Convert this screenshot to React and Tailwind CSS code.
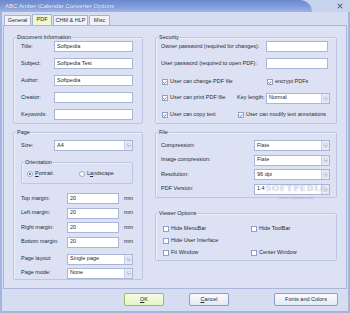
import React from "react";

const PANEL = "bg-[#dce2f3]";

function TextBox({ className = "", value }) {
  return (
    <div className={`h-[11px] bg-white border border-[#a9b6d6] flex items-center pl-[2px] shrink-0 ${className}`}>
      {value}
    </div>
  );
}

function Select({ className = "", value }) {
  return (
    <div className={`h-[11px] bg-white border border-[#a9b6d6] flex items-center shrink-0 ${className}`}>
      <span className="flex-1 pl-[2px]">{value}</span>
      <span className="w-[8px] h-full bg-[#e4eaf8] border-l border-[#c3cde7] flex items-center justify-center">
        <svg viewBox="0 0 6 6" className="w-[5px] h-[5px]">
          <circle cx="3" cy="3" r="2.6" fill="#f4f6fc" stroke="#9aa9cf" strokeWidth="0.5" />
          <path d="M1.7 2.4 L3 3.7 L4.3 2.4" stroke="#3c4f86" strokeWidth="0.8" fill="none" />
        </svg>
      </span>
    </div>
  );
}

function Check({ checked, label, className = "" }) {
  return (
    <div className={`flex items-center gap-[2px] shrink-0 ${className}`}>
      <span className="w-[6px] h-[6px] bg-white border border-[#8ea0c8] flex items-center justify-center shrink-0">
        {checked && (
          <svg viewBox="0 0 6 6" className="w-[5px] h-[5px]">
            <path d="M0.9 2.9 L2.3 4.4 L5.1 1.2" stroke="#2c4599" strokeWidth="1.1" fill="none" />
          </svg>
        )}
      </span>
      <span>{label}</span>
    </div>
  );
}

function Radio({ checked, children, className = "" }) {
  return (
    <div className={`flex items-center gap-[2px] ${className}`}>
      <span className="w-[6px] h-[6px] rounded-full bg-white border border-[#9aaacd] flex items-center justify-center">
        {checked && <span className="w-[2px] h-[2px] rounded-full bg-[#3b54a8]" />}
      </span>
      <span>{children}</span>
    </div>
  );
}

function Group({ title, className = "", children }) {
  return (
    <div className={`relative border border-[#bcc6e2] rounded-[2px] shadow-[inset_1px_1px_0_#eef1fa] ${className}`}>
      <span className={`absolute -top-[4px] left-[2px] px-[1px] leading-[7px] ${PANEL}`}>{title}</span>
      {children}
    </div>
  );
}

function Row({ label, labelClass, children, className = "" }) {
  return (
    <div className={`flex items-center h-[11px] ${className}`}>
      <span className={`shrink-0 ${labelClass}`}>{label}</span>
      {children}
    </div>
  );
}

function Tab({ label, active, className = "" }) {
  return (
    <div
      className={`h-[10px] border border-b-0 border-[#a5b3d6] rounded-t-[1px] flex items-center justify-center ${
        active ? "bg-[#eef6d3]" : "bg-[#f1f3fa]"
      } ${className}`}
    >
      {label}
    </div>
  );
}

function Button({ children, className = "" }) {
  return (
    <div
      className={`h-[13px] border border-[#8e9cc0] rounded-[2px] flex items-center justify-center bg-gradient-to-b from-[#fbfcff] to-[#e3e8f5] ${className}`}
    >
      {children}
    </div>
  );
}

export default function App() {
  return (
    <div
      className="w-[350px] h-[313px] flex flex-col bg-[#d6ddf1] text-[5.5px] leading-none whitespace-nowrap text-[#262a33] overflow-hidden"
      style={{ fontFamily: '"Liberation Sans", Arial, sans-serif' }}
    >
      {/* title bar */}
      <div className="relative h-[12px] bg-[#c8d3ee] shrink-0 flex">
        <div className="w-[312px] h-full rounded-tr-[14px] bg-gradient-to-b from-[#6c89d0] via-[#7f9ad8] to-[#9fb4e4] flex items-center pl-[5px]">
          <span className="text-white text-[6px] [text-shadow:0_0_1px_#3b4f8c]">ABC Amber iCalendar Converter Options</span>
        </div>
        <div className="flex-1 flex items-center justify-end pr-[7px]">
          <svg viewBox="0 0 8 8" className="w-[6px] h-[6px]">
            <path d="M1 1 L7 7 M7 1 L1 7" stroke="#4a5675" strokeWidth="1.4" />
          </svg>
        </div>
      </div>

      <div className="flex-1 flex flex-col border-l-2 border-r-2 border-b-2 border-[#a3b4df]">
        {/* tabs */}
        <div className="flex items-end h-[13px] pl-[2px] gap-[1px]">
          <Tab label="General" className="w-[27px]" />
          <Tab label="PDF" active className="w-[20px] h-[11px]" />
          <Tab label="CHM & HLP" className="w-[35px]" />
          <Tab label="Misc" className="w-[21px]" />
        </div>

        {/* tab panel */}
        <div className={`relative h-[264px] mx-[1px] border border-[#a9b7d9] ${PANEL} flex pt-[11px] pl-[9px]`}>
          {/* left column */}
          <div className="w-[130px] flex flex-col">
            <Group title="Document Information" className="h-[87px] pt-[3px]">
              <div className="flex flex-col gap-[6px] pl-[7px]">
                <Row label="Title:" labelClass="w-[33px]"><TextBox className="w-[79px]" value="Softpedia" /></Row>
                <Row label="Subject:" labelClass="w-[33px]"><TextBox className="w-[79px]" value="Softpedia Test" /></Row>
                <Row label="Author:" labelClass="w-[33px]"><TextBox className="w-[79px]" value="Softpedia" /></Row>
                <Row label="Creator:" labelClass="w-[33px]"><TextBox className="w-[79px]" /></Row>
                <Row label="Keywords:" labelClass="w-[33px]"><TextBox className="w-[79px]" /></Row>
              </div>
            </Group>

            <Group title="Page" className="mt-[8px] h-[148px] pt-[7px] pl-[7px]">
              <Row label="Size:" labelClass="w-[33px]"><Select className="w-[79px]" value="A4" /></Row>
              <Group title="Orientation" className="mt-[11px] w-[112px] h-[22px] pt-[7px]">
                <div className="flex items-center h-[8px] pl-[5px]">
                  <Radio checked className="w-[52px]"><span className="underline">P</span>ortrait</Radio>
                  <Radio>L<span className="underline">a</span>ndscape</Radio>
                </div>
              </Group>
              <div className="mt-[9px] flex flex-col gap-[3.5px]">
                {["Top margin:", "Left margin:", "Right margin:", "Bottom margin:"].map((l) => (
                  <Row key={l} label={l} labelClass="w-[46px]">
                    <TextBox className="w-[52px]" value="20" />
                    <span className="ml-[5px]">mm</span>
                  </Row>
                ))}
              </div>
              <div className="mt-[6px] flex flex-col gap-[3px]">
                <Row label="Page layout:" labelClass="w-[46px]"><Select className="w-[66px]" value="Single page" /></Row>
                <Row label="Page mode:" labelClass="w-[46px]"><Select className="w-[66px]" value="None" /></Row>
              </div>
            </Group>
          </div>

          {/* right column */}
          <div className="w-[182px] ml-[12px] flex flex-col">
            <Group title="Security" className="h-[87px] pt-[3px]">
              <div className="pl-[5px]">
                <Row label="Owner password (required for changes):" labelClass="w-[105px]"><TextBox className="w-[62px]" /></Row>
                <Row label="User password (required to open PDF):" labelClass="w-[105px]" className="mt-[6px]"><TextBox className="w-[62px]" /></Row>
              </div>
              <div className="pl-[6px]">
                <div className="flex items-center h-[11px] mt-[7.5px]">
                  <Check checked label="User can change PDF file" className="w-[105px]" />
                  <Check checked label="encrypt PDFs" />
                </div>
                <div className="flex items-center h-[11px] mt-[5px]">
                  <Check checked label="User can print PDF file" className="w-[75px]" />
                  <span className="w-[29px] shrink-0">Key length:</span>
                  <Select className="w-[64px]" value="Normal" />
                </div>
                <div className="flex items-center h-[11px] mt-[6px]">
                  <Check checked label="User can copy text" className="w-[76px]" />
                  <Check checked label="User can modify text annotations" />
                </div>
              </div>
            </Group>

            <Group title="File" className="mt-[8px] h-[66px] pt-[7px] pl-[5px]">
              <div className="flex flex-col gap-[3.5px]">
                <Row label="Compression:" labelClass="w-[93px]"><Select className="w-[76px]" value="Flate" /></Row>
                <Row label="Image compression:" labelClass="w-[93px]"><Select className="w-[76px]" value="Flate" /></Row>
                <Row label="Resolution:" labelClass="w-[93px]"><Select className="w-[76px]" value="96 dpi" /></Row>
                <Row label="PDF Version:" labelClass="w-[93px]"><Select className="w-[76px]" value="1.4" /></Row>
              </div>
            </Group>

            <Group title="Viewer Options" className="mt-[15px] h-[48px] pt-[10px] pl-[7px]">
              <div className="flex flex-col gap-[2px]">
                <div className="flex items-center h-[10px]">
                  <Check label="Hide MenuBar" className="w-[88px]" />
                  <Check label="Hide ToolBar" />
                </div>
                <div className="flex items-center h-[10px]">
                  <Check label="Hide User Interface" />
                </div>
                <div className="flex items-center h-[10px]">
                  <Check label="Fit Window" className="w-[88px]" />
                  <Check label="Center Window" />
                </div>
              </div>
            </Group>
          </div>

          {/* softpedia watermark */}
          <div className="absolute left-[262px] top-[158px] flex flex-col items-center pointer-events-none">
            <span className="text-[9px] font-bold tracking-[1px] text-white/60 [text-shadow:0_0_1px_#9aa6c4]" style={{ fontFamily: '"Liberation Serif", serif' }}>
              SOFTPEDIA
            </span>
            <span className="text-[4px] mt-[3px] text-[#8f9ab8]/70">www.softpedia.com</span>
          </div>
        </div>

        {/* buttons */}
        <div className="flex mt-[4px]">
          <Button className="ml-[122px] w-[40px] !border-[#9dbb6a] !from-[#f6fbe6] !to-[#e6f3c4]">
            <span><span className="underline">O</span>K</span>
          </Button>
          <Button className="ml-[25px] w-[40px]">
            <span><span className="underline">C</span>ancel</span>
          </Button>
          <Button className="ml-[45px] w-[64px]">Fonts and Colors</Button>
        </div>
      </div>
    </div>
  );
}
